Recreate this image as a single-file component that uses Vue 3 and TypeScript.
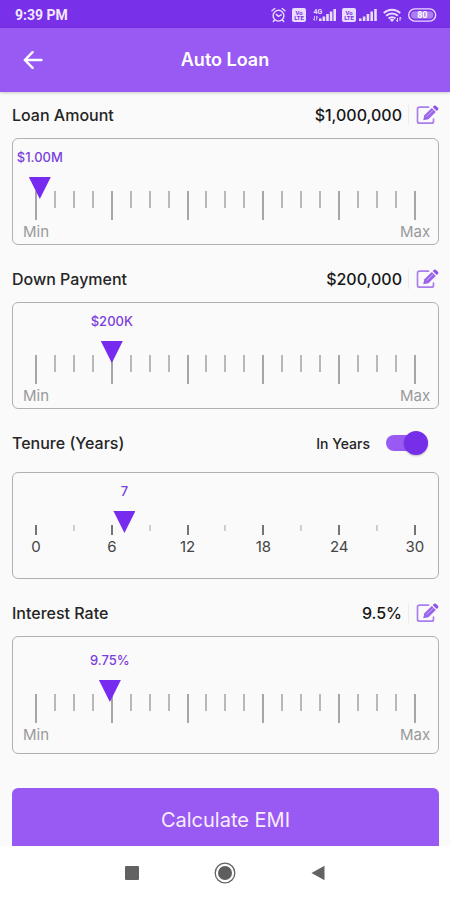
<script setup lang="ts">
import { reactive, ref } from 'vue'

interface Gauge {
  id: string
  title: string
  min: number
  max: number
  step: number
  value: number
  header: string
  bubble: (v: number) => string
  full: (v: number) => string
  kind: 'amount' | 'tenure' | 'rate'
}

const compact = (v: number): string =>
  v >= 1000000 ? `$${(v / 1000000).toFixed(2)}M` : `$${Math.round(v / 1000)}K`
const dollars = (v: number): string => `$${v.toLocaleString('en-US')}`
const percent = (v: number): string => `${v}%`

const gauges = reactive<Gauge[]>([
  { id: 'loan', title: 'Loan Amount', min: 0, max: 100000000, step: 100000, value: 1000000, header: '$1,000,000', bubble: compact, full: dollars, kind: 'amount' },
  { id: 'down', title: 'Down Payment', min: 0, max: 1000000, step: 1000, value: 200000, header: '$200,000', bubble: compact, full: dollars, kind: 'amount' },
  { id: 'tenure', title: 'Tenure (Years)', min: 0, max: 30, step: 1, value: 7, header: '', bubble: String, full: String, kind: 'tenure' },
  { id: 'rate', title: 'Interest Rate', min: 0, max: 50, step: 0.25, value: 9.75, header: '9.5%', bubble: percent, full: percent, kind: 'rate' },
])

const inYears = ref(true)
const years = [0, 6, 12, 18, 24, 30]

const bubbleLeft = (g: Gauge): string => {
  const p = (g.value - g.min) / (g.max - g.min)
  return `calc(11px + (100% - 22px) * ${p})`
}

const sync = (g: Gauge): void => {
  g.header = g.full(g.value)
}
</script>

<template>
  <div class="screen">
    <div class="status">
      <span class="clock">9:39 PM</span>
      <div class="status-icons">
        <svg width="15" height="16" viewBox="0 0 15 16" fill="none" stroke="currentColor" stroke-width="1.4" stroke-linecap="round">
          <circle cx="7.5" cy="8.7" r="5.4" />
          <path d="M1 3.8 3.8 1.5M14 3.8 11.2 1.5M5.2 7.4l2.3 2 2.7-1.6M3.4 13.2l-1.1 1.3M11.6 13.2l1.1 1.3" />
        </svg>
        <svg width="14" height="14" viewBox="0 0 14 14">
          <rect width="14" height="14" rx="2" fill="currentColor" />
          <text x="7" y="6.6" class="volte">Vo</text>
          <text x="7" y="12.4" class="volte">LTE</text>
        </svg>
        <svg width="24" height="14" viewBox="0 0 24 14" fill="currentColor">
          <text x="1.5" y="6" class="net">4G</text>
          <path d="M2.5 8v4.2M1 10.8l1.5 1.7M4.7 12.5V8.2l1.3 1.6" fill="none" stroke="currentColor" stroke-width=".8" />
          <path d="M7 10.5h2.6V13H7zM10.6 8.5h2.6V13h-2.6zM14.2 6h2.6v7h-2.6zM17.8 3.5h2.6V13h-2.6zM21.4 1H24v12h-2.6z" />
        </svg>
        <div class="sim">
          <svg width="14" height="14" viewBox="0 0 14 14">
            <rect width="14" height="14" rx="2" fill="currentColor" />
            <text x="7" y="6.6" class="volte">Vo</text>
            <text x="7" y="12.4" class="volte">LTE</text>
          </svg>
          <svg width="18" height="14" viewBox="0 0 18 14" fill="currentColor">
            <path d="M0 10.5h2.6V13H0zM3.8 8.5h2.6V13H3.8zM7.6 6h2.6v7H7.6zM11.4 3.5H14V13h-2.6zM15.2 1h2.6v12h-2.6z" />
          </svg>
        </div>
        <svg width="19" height="15" viewBox="0 0 19 15" fill="none" stroke="currentColor" stroke-width="2">
          <path d="M.8 5a12 12 0 0 1 16.4 0M3.2 7.800a8.500 8.500 0 0 1 11.600 0M5.600 10.500a5 5 0 0 1 6.800 0" />
          <path d="M6.800 11.800 9 14l2.200-2.200a3 3 0 0 0-4.400 0z" fill="currentColor" stroke="none" />
          <path d="M14.500 13.500V10M13.200 12.200l1.300 1.400M17 9.200v3.600M17 9l1.200 1.400" stroke-width="1" />
        </svg>
        <svg width="29" height="14" viewBox="0 0 29 14">
          <rect x=".7" y=".9" width="27" height="12.2" rx="6.1" fill="none" stroke="currentColor" stroke-width="1.4" />
          <rect x="3" y="3.2" width="22.4" height="7.6" rx="3.8" fill="currentColor" opacity=".45" />
          <text x="14.3" y="10.4" class="charge">80</text>
        </svg>
      </div>
    </div>

    <header class="appbar">
      <button class="icon-btn back" type="button" aria-label="Back">
        <svg width="20" height="20" viewBox="0 0 20 20" fill="none" stroke="currentColor" stroke-width="2.4" stroke-linecap="round" stroke-linejoin="round">
          <path d="M18.500 10H1.800M9.600 2.200 1.800 10l7.800 7.800" />
        </svg>
      </button>
      <h1>Auto Loan</h1>
    </header>

    <main>
      <section v-for="g in gauges" :key="g.id" :class="g.kind">
        <div class="row">
          <label class="title" :for="g.id">{{ g.title }}</label>
          <label v-if="g.kind === 'tenure'" class="switch">
            <span>In Years</span>
            <input v-model="inYears" type="checkbox" role="switch" />
          </label>
          <div v-else class="entry">
            <span class="figure">{{ g.header }}</span>
            <button class="icon-btn edit" type="button" :aria-label="`Edit ${g.title}`">
              <svg width="23" height="20" viewBox="0 0 23 20">
                <path d="M12.500 2.200H3.500q-2 0-2 2v12q0 2 2 2h12q2 0 2-2V14" fill="none" stroke="#a97fec" stroke-width="1.700" stroke-linecap="round" />
                <path d="M7.200 15.200 8.400 10.200 15.800 3l4 4-7.400 7.200z" fill="#9a63ee" />
                <path d="M16.700 2.100 18.200.8q.8-.7 1.600 0l2.300 2.300q.7.8 0 1.600l-1.400 1.400z" fill="#8f53ea" />
                <path d="M10.600 11.600 17 5.400" stroke="#cdb2f7" stroke-width="1" />
              </svg>
            </button>
          </div>
        </div>

        <div class="card">
          <div class="bubble-row">
            <output :for="g.id" :style="{ left: bubbleLeft(g) }">{{ g.bubble(g.value) }}</output>
          </div>
          <div class="scale">
            <div class="ticks" aria-hidden="true">
              <template v-if="g.kind === 'tenure'">
                <i v-for="n in 11" :key="n" :class="{ major: n % 2 === 1 }"></i>
              </template>
              <template v-else>
                <i v-for="n in 21" :key="n" :class="{ major: n % 4 === 1 }"></i>
              </template>
            </div>
            <input :id="g.id" v-model.number="g.value" type="range" :min="g.min" :max="g.max" :step="g.step" @input="sync(g)" />
          </div>
          <div class="labels">
            <template v-if="g.kind === 'tenure'">
              <span v-for="y in years" :key="y">{{ y }}</span>
            </template>
            <template v-else>
              <span>Min</span>
              <span>Max</span>
            </template>
          </div>
        </div>
      </section>

      <button class="calculate" type="button">Calculate EMI</button>
    </main>

    <nav>
      <button class="icon-btn" type="button" aria-label="Recent apps">
        <svg width="14" height="14" viewBox="0 0 14 14"><rect width="14" height="14" rx="1" fill="#626262" /></svg>
      </button>
      <button class="icon-btn" type="button" aria-label="Home">
        <svg width="22" height="22" viewBox="0 0 22 22">
          <circle cx="11" cy="11" r="9.800" fill="none" stroke="#626262" stroke-width="1.300" />
          <circle cx="11" cy="11" r="7" fill="#5e5e5e" />
        </svg>
      </button>
      <button class="icon-btn" type="button" aria-label="Go back">
        <svg width="14" height="16" viewBox="0 0 14 16"><path d="M13.500.8v14.400L.5 8z" fill="#626262" /></svg>
      </button>
    </nav>
  </div>
</template>

<style>
body {
  margin: 0;
}
</style>

<style scoped>
* {
  box-sizing: border-box;
}

.screen {
  display: flex;
  flex-direction: column;
  height: 100vh;
  background: #fafafa;
  color: #252525;
  font-family: Inter, Roboto, sans-serif;
}

button,
input {
  margin: 0;
  font-family: inherit;
}

svg {
  display: block;
}

.icon-btn {
  display: flex;
  align-items: center;
  justify-content: center;
  padding: 0;
  border: 0;
  background: none;
  color: inherit;
}

.status {
  display: flex;
  flex: none;
  align-items: center;
  justify-content: space-between;
  height: 28px;
  padding: 2px 13px 0 15px;
  background: #7830e8;
  color: #eadcff;
}

.clock {
  color: #f3e9ff;
  font: 700 14px/20px Roboto, sans-serif;
}

.status-icons {
  display: flex;
  align-items: center;
  gap: 6px;
}

.sim {
  display: flex;
  gap: 3px;
}

.volte {
  fill: #7830e8;
  font: 700 6px Roboto, sans-serif;
  text-anchor: middle;
}

.net {
  font: 700 7px Roboto, sans-serif;
}

.charge {
  fill: #fff;
  font: 700 9px Roboto, sans-serif;
  text-anchor: middle;
}

.appbar {
  display: grid;
  flex: none;
  grid-template-columns: 48px 1fr 48px;
  align-items: center;
  height: 64px;
  padding: 0 9px;
  background: #985af2;
  box-shadow: 0 1px 3px #00000030;
  color: #fff;
}

.back {
  height: 48px;
}

h1 {
  margin: 0;
  font-size: 18px;
  font-weight: 600;
  line-height: 24px;
  text-align: center;
}

main {
  flex: 1;
  min-height: 0;
  padding: 0 11px 0 12px;
  overflow-y: auto;
  scrollbar-width: none;
}

section + section {
  padding-top: 11px;
}

.row {
  display: flex;
  align-items: center;
  justify-content: space-between;
  height: 46px;
}

.tenure .row {
  margin-bottom: 6px;
}

.title,
.figure {
  font-size: 16px;
  font-weight: 500;
  line-height: 20px;
}

.figure {
  color: #161616;
}

.entry {
  display: flex;
  align-items: center;
  gap: 6px;
}

.edit {
  padding-left: 7px;
  border-left: 1px solid #ececec;
}

.switch {
  display: flex;
  align-items: center;
  gap: 16px;
  padding-right: 11px;
  font-size: 14px;
  font-weight: 500;
}

.switch input {
  display: flex;
  align-items: center;
  width: 42px;
  height: 16px;
  appearance: none;
  background: #985af2;
  border-radius: 8px;
}

.switch input::before {
  width: 24px;
  height: 24px;
  border-radius: 50%;
  background: #762ee8;
  box-shadow: 0 1px 2px #00000040;
  content: '';
}

.switch input:checked::before {
  margin-left: auto;
}

.card {
  padding: 9px 12px 3px;
  border: 1px solid #b0b0b0;
  border-radius: 6px;
}

.tenure .card {
  padding-bottom: 22px;
}

.rate .card {
  padding-top: 14px;
  padding-bottom: 9px;
}

.bubble-row {
  position: relative;
  height: 18px;
  margin-bottom: 11px;
}

output {
  position: absolute;
  color: #7b3fdc;
  font-size: 13px;
  font-weight: 500;
  line-height: 18px;
  white-space: nowrap;
  transform: translateX(-50%);
}

.scale {
  display: grid;
}

.ticks,
.scale input {
  grid-area: 1 / 1;
}

.ticks {
  display: flex;
  align-items: flex-start;
  justify-content: space-between;
  padding: 14px 10px 0;
}

.ticks i {
  width: 2px;
  height: 17px;
  background: #b8b8b8;
}

.ticks .major {
  height: 29px;
  background: #a6a6a6;
}

.tenure .ticks i {
  height: 6px;
  background: #cfcfcf;
}

.tenure .ticks .major {
  height: 10px;
  background: #757575;
}

.scale input {
  width: 100%;
  height: 22px;
  appearance: none;
  background: none;
}

.scale input::-webkit-slider-thumb {
  width: 22px;
  height: 22px;
  appearance: none;
  background: #772bef;
  clip-path: polygon(0 0, 100% 0, 50% 100%);
}

.labels {
  display: flex;
  justify-content: space-between;
  margin-top: 2px;
  color: #999;
  font-size: 15px;
  line-height: 19px;
}

.labels span {
  display: flex;
  justify-content: center;
  width: 22px;
}

.tenure .labels {
  color: #444;
}

.calculate {
  display: block;
  width: 100%;
  height: 64px;
  margin-top: 34px;
  border: 0;
  border-radius: 6px;
  background: #985af2;
  color: #f8edff;
  font-size: 20px;
}

nav {
  display: flex;
  flex: none;
  justify-content: center;
  gap: 45px;
  height: 54px;
  background: #fff;
}

nav .icon-btn {
  width: 48px;
}
</style>
